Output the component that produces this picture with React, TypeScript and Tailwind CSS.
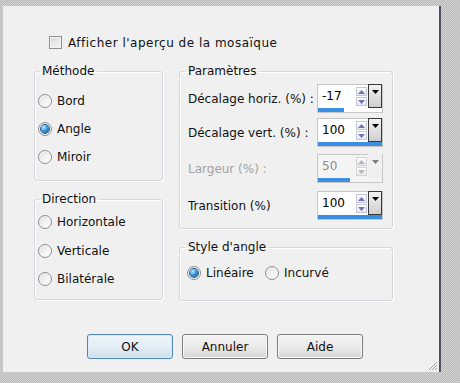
import React from 'react';

const font = { fontFamily: '"DejaVu Sans", Verdana, sans-serif' };

const Radio = ({ checked }: { checked?: boolean }) => (
    <span className="w-[14px] h-[14px] rounded-full border border-[#8c8e90] bg-gradient-to-br from-[#d9d9d9] via-[#f2f2f2] to-white flex items-center justify-center shrink-0 shadow-[inset_0_0_0_1px_#f6f6f6]">
        {checked && (
            <span className="w-[8px] h-[8px] rounded-full bg-[radial-gradient(circle_at_35%_30%,#c9ecff_0%,#3b95d4_45%,#0d4b7e_100%)] shadow-[0_0_0_1px_#2a5f8c]" />
        )}
    </span>
);

const RadioRow = ({ label, checked, className = '' }: { label: string; checked?: boolean; className?: string }) => (
    <div className={`flex items-center gap-[5px] h-[28px] ${className}`}>
        <Radio checked={checked} />
        <span>{label}</span>
    </div>
);

const Group = ({ title, className, legend, children }: { title: string; className: string; legend: string; children: React.ReactNode }) => (
    <fieldset className={`border border-[#d5d8dc] rounded-[3px] shadow-[inset_1px_1px_0_#fff,1px_1px_0_#fff] ${className}`}>
        <legend className={`leading-[14px] px-[3px] ${legend}`}>{title}</legend>
        {children}
    </fieldset>
);

const Arrow = ({ up, color }: { up?: boolean; color: string }) => (
    <svg width="7" height="4" viewBox="0 0 7 4">
        <path d={up ? 'M0 4 L3.5 0 L7 4 Z' : 'M0 0 L7 0 L3.5 4 Z'} fill={color} />
    </svg>
);

const Spin = ({ value, pct, disabled }: { value: string; pct: number; disabled?: boolean }) => (
    <div className={`w-[66px] h-[29px] border border-[#c6c6c6] flex flex-col ${disabled ? 'bg-[#f4f4f4]' : 'bg-white'}`}>
        <div className="h-[23px] flex">
            <div className={`flex-1 pl-[4px] leading-[22px] text-[12px] ${disabled ? 'text-[#8d8d8d]' : 'text-black'}`}>{value}</div>
            <div className="w-[11px] flex flex-col gap-[1px] pt-[2px]">
                <div className={`h-[9px] border ${disabled ? 'border-[#d4d4d4]' : 'border-[#c4c6dc]'} bg-gradient-to-b from-white to-[#e8e8ef] flex items-center justify-center`}>
                    <Arrow up color={disabled ? '#b5b5b5' : '#6f73b8'} />
                </div>
                <div className={`h-[9px] border ${disabled ? 'border-[#d4d4d4]' : 'border-[#c4c6dc]'} bg-gradient-to-b from-white to-[#e8e8ef] flex items-center justify-center`}>
                    <Arrow color={disabled ? '#b5b5b5' : '#6f73b8'} />
                </div>
            </div>
            <div className={`w-[14px] h-[24px] -mt-[1px] ml-[1px] border ${disabled ? 'border-transparent bg-[#f0f0f0]' : 'border-[#3a3a3a] bg-gradient-to-b from-[#f2f2f2] to-[#cfcfcf]'} flex justify-center pt-[5px]`}>
                <Arrow color={disabled ? '#7a7a7a' : '#000'} />
            </div>
        </div>
        <div className="h-[4px]">
            <div className="h-full bg-[#3b8fe3]" style={{ width: `${pct}%` }} />
        </div>
    </div>
);

const ParamRow = ({ label, value, pct, disabled, className = '' }: { label: string; value: string; pct: number; disabled?: boolean; className?: string }) => (
    <div className={`flex items-center ${className}`}>
        <span className={`w-[129px] ${disabled ? 'text-[#a3a3a3]' : ''}`}>{label}</span>
        <Spin value={value} pct={pct} disabled={disabled} />
    </div>
);

const Button = ({ label, primary }: { label: string; primary?: boolean }) => (
    <button
        className={`w-[86px] h-[25px] rounded-[3px] border text-[12px] ${primary
            ? 'border-[#4f87b0] bg-gradient-to-b from-[#eef5fa] via-[#e3eef6] to-[#cfdfea] shadow-[inset_0_0_0_1px_#d5ebf8]'
            : 'border-[#7a7a7a] bg-gradient-to-b from-[#f3f3f3] via-[#eaeaea] to-[#d6d6d6] shadow-[inset_0_0_0_1px_#fbfbfb]'}`}
    >
        {label}
    </button>
);

export default function App() {
    return (
        <div
            className="w-[460px] h-[383px] overflow-hidden bg-[#c6c6c6] bg-[repeating-conic-gradient(#bdbdbd_0%_25%,#d0d0d0_0%_50%)] bg-[length:2px_2px] pt-[6px] pl-[3px]"
            style={font}
        >
            <div className="relative w-[438px] h-[366px] bg-[#f0f0f0] border-r-2 border-[#564c66] text-[12px] text-[#111] flex flex-col">
                <div className="mt-[30px] ml-[46px] h-[13px] flex items-center gap-[6px]">
                    <span className="w-[13px] h-[13px] border border-[#8e8f8f] bg-gradient-to-br from-[#d8d8d8] to-[#f7f7f7] shadow-[inset_0_0_0_1px_#f4f4f4]" />
                    <span className="tracking-[0.5px]">Afficher l'aperçu de la mosaïque</span>
                </div>

                <div className="mt-[15px] ml-[31px] flex gap-[16px]">
                    <div className="w-[129px] flex flex-col gap-[11px]">
                        <Group title="Méthode" legend="ml-[1px]" className="h-[117px] pl-[3px] pt-[9px]">
                            <RadioRow label="Bord" />
                            <RadioRow label="Angle" checked />
                            <RadioRow label="Miroir" />
                        </Group>
                        <Group title="Direction" legend="ml-[1px]" className="h-[108px] pl-[3px] pt-[2px]">
                            <RadioRow label="Horizontale" />
                            <RadioRow label="Verticale" className="mt-[1px]" />
                            <RadioRow label="Bilatérale" />
                        </Group>
                    </div>
                    <div className="w-[214px] flex flex-col gap-[11px]">
                        <Group title="Paramètres" legend="-ml-[3px]" className="h-[165px] pl-[8px] pt-[6px]">
                            <ParamRow label="Décalage horiz. (%) :" value="-17" pct={41} />
                            <ParamRow label="Décalage vert. (%) :" value="100" pct={100} className="mt-[5px]" />
                            <ParamRow label="Largeur (%) :" value="50" pct={50} disabled className="mt-[7px]" />
                            <ParamRow label="Transition (%)" value="100" pct={100} className="mt-[8px]" />
                        </Group>
                        <Group title="Style d'angle" legend="-ml-[2px]" className="h-[61px] pl-[7px] pt-[5px]">
                            <div className="flex">
                                <RadioRow label="Linéaire" checked className="w-[78px]" />
                                <RadioRow label="Incurvé" />
                            </div>
                        </Group>
                    </div>
                </div>

                <div className="mt-[33px] ml-[84px] flex gap-[9px]">
                    <Button label="OK" primary />
                    <Button label="Annuler" />
                    <Button label="Aide" />
                </div>

                <svg className="absolute right-[1px] bottom-[1px]" width="11" height="11" viewBox="0 0 11 11">
                    <path d="M10 2 L2 10 M10 5 L5 10 M10 8 L8 10" stroke="#a0a0a0" strokeWidth="1" />
                </svg>
            </div>
        </div>
    );
}
